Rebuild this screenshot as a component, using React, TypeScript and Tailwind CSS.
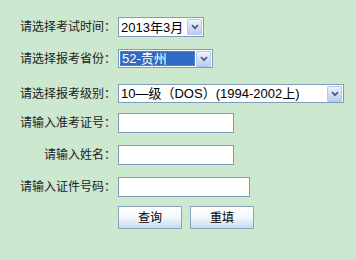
import React from "react";

const FONT = { fontFamily: '"Liberation Sans", "Noto Sans CJK SC", sans-serif' };

function Arrow() {
  return (
    <div className="flex h-[16px] w-[15px] shrink-0 items-center justify-center rounded-[1px] border border-[#b5c8ee] bg-gradient-to-b from-[#eef3fd] to-[#b9cbf1]">
      <svg width="8" height="6" viewBox="0 0 8 6">
        <path d="M1 1.2 L4 4.2 L7 1.2" fill="none" stroke="#4b5f86" strokeWidth="1.8" />
      </svg>
    </div>
  );
}

function Select({ w, text, selected }: { w: string; text: string; selected?: boolean }) {
  return (
    <div className={`flex h-full items-center justify-between border border-[#7f9db9] bg-white pl-[1px] pr-[1px] ${w}`}>
      {selected ? (
        <div className="flex h-[15px] w-[75px] items-center border border-dotted border-[#6f93d6] bg-[#316ac5] pl-[1px] text-[13px] leading-none text-white">
          {text}
        </div>
      ) : (
        <div className="pl-[1px] text-[13px] leading-none text-black">{text}</div>
      )}
      <Arrow />
    </div>
  );
}

function Label({ children }: { children: React.ReactNode }) {
  return (
    <div className="w-[116px] shrink-0 text-right text-[12px] leading-none text-[#222]">
      {children}
    </div>
  );
}

function Input({ w }: { w: string }) {
  return <div className={`h-full border border-[#7f9db9] bg-white ${w}`} />;
}

function Btn({ children }: { children: React.ReactNode }) {
  return (
    <div className="flex h-[23px] w-[64px] items-center justify-center border border-[#8ca3bf] bg-gradient-to-b from-white via-[#f3f7fc] to-[#c8dbf1] text-[12px] leading-none text-black">
      {children}
    </div>
  );
}

export default function App() {
  return (
    <div className="h-[260px] w-[356px] overflow-hidden bg-[#cce8cf]" style={FONT}>
      <div className="flex flex-col pt-[17px]">
        <div className="flex h-[20px] items-center gap-[2px]">
          <Label>请选择考试时间：</Label>
          <Select w="w-[86px]" text="2013年3月" />
        </div>
        <div className="mt-[12px] flex h-[19px] items-center gap-[2px]">
          <Label>请选择报考省份：</Label>
          <Select w="w-[95px]" text="52-贵州" selected />
        </div>
        <div className="mt-[16px] flex h-[19px] items-center gap-[2px]">
          <Label>请选择报考级别：</Label>
          <Select w="w-[226px]" text="10—级（DOS）(1994-2002上)" />
        </div>
        <div className="mt-[10px] flex h-[20px] items-center gap-[2px]">
          <Label>请输入准考证号：</Label>
          <Input w="w-[116px]" />
        </div>
        <div className="mt-[12px] flex h-[20px] items-center gap-[2px]">
          <Label>请输入姓名：</Label>
          <Input w="w-[116px]" />
        </div>
        <div className="mt-[12px] flex h-[20px] items-center gap-[2px]">
          <Label>请输入证件号码：</Label>
          <Input w="w-[132px]" />
        </div>
        <div className="mt-[9px] flex gap-[8px] pl-[118px]">
          <Btn>查询</Btn>
          <Btn>重填</Btn>
        </div>
      </div>
    </div>
  );
}
